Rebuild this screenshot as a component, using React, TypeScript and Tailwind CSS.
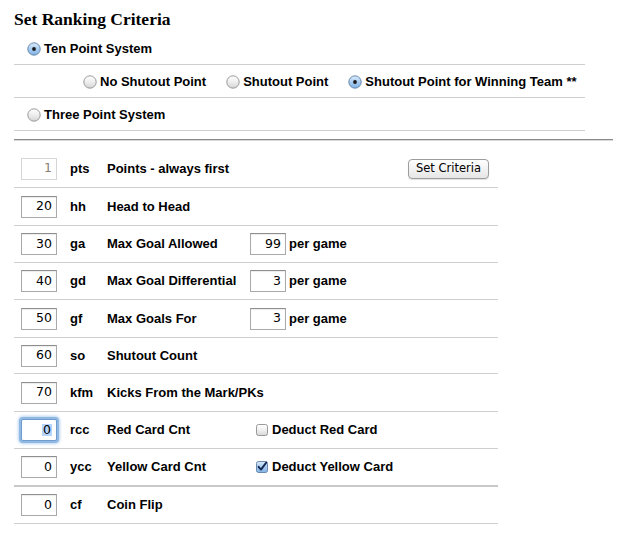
import React from "react";

function Radio({ checked }: { checked?: boolean }) {
  return (
    <svg width="14" height="14" viewBox="0 0 14 14" className="shrink-0">
      <defs>
        <linearGradient id="radOff" x1="0" y1="0" x2="0" y2="1">
          <stop offset="0" stopColor="#ffffff" />
          <stop offset="0.5" stopColor="#eeeeee" />
          <stop offset="1" stopColor="#d4d4d4" />
        </linearGradient>
        <linearGradient id="radOn" x1="0" y1="0" x2="0" y2="1">
          <stop offset="0" stopColor="#dcebfa" />
          <stop offset="0.5" stopColor="#a9cdf1" />
          <stop offset="1" stopColor="#7fb2e5" />
        </linearGradient>
      </defs>
      <circle
        cx="7"
        cy="7"
        r="6.2"
        fill={checked ? "url(#radOn)" : "url(#radOff)"}
        stroke={checked ? "#5f7fa3" : "#8f8f8f"}
        strokeWidth="0.9"
      />
      {checked && <circle cx="7" cy="7" r="1.9" fill="#1a1a1a" />}
    </svg>
  );
}

function Checkbox({ checked }: { checked?: boolean }) {
  return (
    <svg width="12" height="12" viewBox="0 0 12 12" className="shrink-0">
      <defs>
        <linearGradient id="cbOff" x1="0" y1="0" x2="0" y2="1">
          <stop offset="0" stopColor="#ffffff" />
          <stop offset="0.5" stopColor="#f0f0f0" />
          <stop offset="1" stopColor="#d6d6d6" />
        </linearGradient>
        <linearGradient id="cbOn" x1="0" y1="0" x2="0" y2="1">
          <stop offset="0" stopColor="#dcebfa" />
          <stop offset="0.5" stopColor="#a9cdf1" />
          <stop offset="1" stopColor="#7fb2e5" />
        </linearGradient>
      </defs>
      <rect
        x="0.5"
        y="0.5"
        width="11"
        height="11"
        rx="2"
        fill={checked ? "url(#cbOn)" : "url(#cbOff)"}
        stroke={checked ? "#5f7fa3" : "#8f8f8f"}
        strokeWidth="0.9"
      />
      {checked && (
        <path
          d="M2.6 5.8 L5 8.6 L10.2 1.6"
          fill="none"
          stroke="#142a52"
          strokeWidth="1.9"
          strokeLinecap="round"
          strokeLinejoin="round"
        />
      )}
    </svg>
  );
}

function Box({
  value,
  disabled,
  focused,
}: {
  value: string;
  disabled?: boolean;
  focused?: boolean;
}) {
  const base =
    "w-[36px] h-[22px] shrink-0 flex items-center justify-end pr-[4px] text-[12.5px] font-normal leading-none [font-family:'DejaVu_Sans',sans-serif] bg-white";
  if (focused) {
    return (
      <div
        className={
          base +
          " border border-[#6f9bcf] rounded-[2px] shadow-[0_0_0_2px_#8fb8e3,0_0_3px_3px_#b9d4f0]"
        }
      >
        <span className="bg-[#b5d5fe] text-black px-[1px]">{value}</span>
      </div>
    );
  }
  return (
    <div
      className={
        base +
        (disabled
          ? " border border-[#d6d6d6] text-[#8a7f74]"
          : " border border-[#a9a9a9] border-t-[#8e8e8e] text-black shadow-[inset_0_1px_1px_rgba(0,0,0,0.08)]")
      }
    >
      {value}
    </div>
  );
}

type Row = {
  v: string;
  code: string;
  label: string;
  h: string;
  disabled?: boolean;
  focused?: boolean;
  extra?: React.ReactNode;
  thick?: boolean;
};

function PerGame({ v }: { v: string }) {
  return (
    <div className="flex items-center">
      <Box value={v} />
      <span className="ml-[3px]">per game</span>
    </div>
  );
}

function Deduct({ label, checked }: { label: string; checked?: boolean }) {
  return (
    <div className="flex items-center pl-[6px]">
      <Checkbox checked={checked} />
      <span className="ml-[4px]">{label}</span>
    </div>
  );
}

export default function App() {
  const rows: Row[] = [
    { v: "1", code: "pts", label: "Points - always first", h: "h-[38px]", disabled: true },
    { v: "20", code: "hh", label: "Head to Head", h: "h-[38px]" },
    { v: "30", code: "ga", label: "Max Goal Allowed", h: "h-[37px]", extra: <PerGame v="99" /> },
    { v: "40", code: "gd", label: "Max Goal Differential", h: "h-[37px]", extra: <PerGame v="3" /> },
    { v: "50", code: "gf", label: "Max Goals For", h: "h-[38px]", extra: <PerGame v="3" /> },
    { v: "60", code: "so", label: "Shutout Count", h: "h-[36px]" },
    { v: "70", code: "kfm", label: "Kicks From the Mark/PKs", h: "h-[38px]" },
    { v: "0", code: "rcc", label: "Red Card Cnt", h: "h-[37px]", focused: true, extra: <Deduct label="Deduct Red Card" /> },
    { v: "0", code: "ycc", label: "Yellow Card Cnt", h: "h-[38px]", thick: true, extra: <Deduct label="Deduct Yellow Card" checked /> },
    { v: "0", code: "cf", label: "Coin Flip", h: "h-[37px]" },
  ];

  return (
    <div className="w-[643px] h-[545px] bg-white pl-[14px] [font-family:'Liberation_Sans',Arial,sans-serif] text-[13px] font-bold text-black">
      <div className="pt-[10px] h-[32px] [font-family:'Liberation_Serif','Times_New_Roman',serif] text-[17.5px] leading-[19px] font-bold">
        Set Ranking Criteria
      </div>

      <div className="w-[571px]">
        <div className="h-[33px] border-b border-[#cfcfcf] flex items-center pl-[13px] pt-[2px]">
          <Radio checked />
          <span className="ml-[3px]">Ten Point System</span>
        </div>
        <div className="h-[33px] border-b border-[#cfcfcf] flex items-center pl-[69px] gap-[20px] pt-[2px]">
          <div className="flex items-center">
            <Radio />
            <span className="ml-[3px]">No Shutout Point</span>
          </div>
          <div className="flex items-center">
            <Radio />
            <span className="ml-[3px]">Shutout Point</span>
          </div>
          <div className="flex items-center">
            <Radio checked />
            <span className="ml-[3px]">Shutout Point for Winning Team **</span>
          </div>
        </div>
        <div className="h-[33px] border-b border-[#cfcfcf] flex items-center pl-[13px] pt-[2px]">
          <Radio />
          <span className="ml-[3px]">Three Point System</span>
        </div>
      </div>

      <div className="mt-[8px] w-[599px] h-[2px] border-t border-[#8a8a8a] border-b border-b-[#d9d9d9]" />

      <div className="mt-[9px] w-[484px]">
        {rows.map((r, i) => (
          <div
            key={i}
            className={
              "flex items-center pl-[7px] " +
              r.h +
              (r.thick ? " border-b-2 border-[#c9c9c9]" : " border-b border-[#cfcfcf]")
            }
          >
            <Box value={r.v} disabled={r.disabled} focused={r.focused} />
            <span className="ml-[13px] w-[37px] shrink-0">{r.code}</span>
            <span className="w-[143px] shrink-0 whitespace-nowrap">{r.label}</span>
            {r.extra}
            {i === 0 && (
              <button className="ml-auto mr-[9px] w-[81px] h-[20px] rounded-[4px] border border-[#9c9c9c] bg-gradient-to-b from-[#ffffff] to-[#e6e6e6] shadow-[0_1px_1px_rgba(0,0,0,0.12)] text-[11.5px] font-normal text-black [font-family:'DejaVu_Sans',sans-serif] leading-none">
                Set Criteria
              </button>
            )}
          </div>
        ))}
      </div>
    </div>
  );
}
